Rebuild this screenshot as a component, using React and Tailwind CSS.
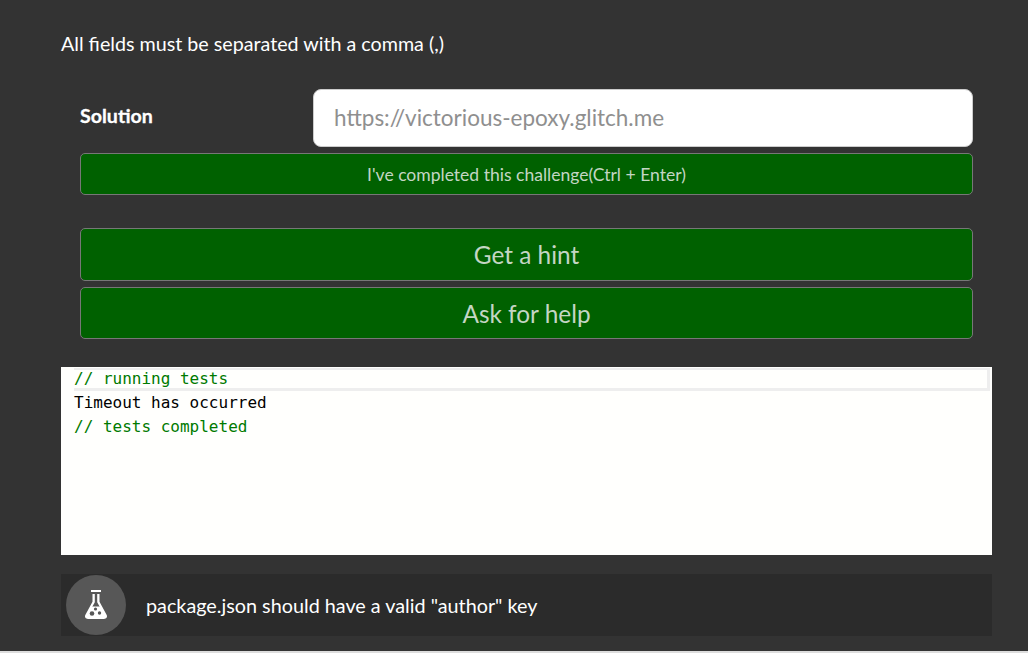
export default function App() {
  const btn = "flex w-full items-center justify-center rounded-[5px] border border-[#777] bg-[#006100] text-[#c4d6c4]";
  return (
    <div className="flex h-[653px] w-[1028px] flex-col overflow-hidden bg-[#333] text-white [font-family:Lato,sans-serif]">
      <div className="flex-1 pl-[61px] pr-[36px] pt-[32px]">
        <p className="text-[19.7px] leading-[24px] text-white">All fields must be separated with a comma (,)</p>
        <div className="mt-[34px] px-[19px]">
          <div className="flex items-center">
            <label className="-mt-[5px] w-[233px] text-[19.6px] font-bold leading-[24px] [-webkit-text-stroke:0.3px_white]">Solution</label>
            <input
              readOnly
              placeholder="https://victorious-epoxy.glitch.me"
              className="-mt-[1px] h-[58px] flex-1 rounded-[8px] border border-[#ccc] bg-white px-[20px] pb-[2px] text-[22.5px] text-[#333] outline-none placeholder:text-[#8f8f8f]"
            />
          </div>
          <button className={btn + " mt-[6px] h-[42px] pt-[2px] text-[17.55px]"}>I've completed this challenge(Ctrl + Enter)</button>
          <button className={btn + " mt-[33px] h-[53px] pt-[2px] text-[24.4px]"}>Get a hint</button>
          <button className={btn + " mt-[6px] h-[52px] pt-[2px] text-[24.4px]"}>Ask for help</button>
        </div>
        <div className="mt-[28px] h-[188px] bg-[#fffffd] text-[16px] leading-[24px] [font-family:'DejaVu_Sans_Mono',monospace]">
          <div className="relative">
            <div className="absolute left-[13px] right-[2px] top-[1px] h-[23px] border-t-2 border-r-[3px] border-b-[3px] border-[#eee]" />
            <div className="relative pl-[13px] text-[#007a00]">// running tests</div>
            <div className="pl-[13px] text-black">Timeout has occurred</div>
            <div className="pl-[13px] text-[#007a00]">// tests completed</div>
          </div>
        </div>
        <div className="mt-[19px] flex h-[62px] items-center bg-[#2b2b2b] pl-[5px]">
          <div className="flex h-[60px] w-[60px] items-center justify-center rounded-full bg-[#575757]">
            <svg width="24" height="30" viewBox="0 0 24 30" fill="none">
              <rect x="7" y="0" width="10" height="2" fill="#fff" />
              <path fillRule="evenodd" clipRule="evenodd" fill="#fff" d="M8.500 4h2.300v8.300L4 24.600c-.6 1.100.2 2.400 1.400 2.400h13.200c1.200 0 2-1.300 1.400-2.400L13.200 12.300V4h2.300v7.800l7.200 13.300C23.700 27.100 22.300 29 20 29H4c-2.300 0-3.700-1.900-2.700-3.900L8.500 11.800z" />
              <path fill="#fff" d="M6.800 16.500h10.400L22 26c.3 1-.4 2-1.500 2h-17C2.400 28 1.700 27 2 26z" />
              <circle cx="8" cy="23.500" r="2.300" fill="#575757" />
              <circle cx="15.500" cy="23" r="1.700" fill="#575757" />
              <circle cx="11.500" cy="19" r="1.600" fill="#575757" />
            </svg>
          </div>
          <span className="ml-[20px] pt-[2px] text-[19.8px]">package.json should have a valid "author" key</span>
        </div>
      </div>
      <div className="h-[2px] bg-[#ddd]" />
    </div>
  );
}
